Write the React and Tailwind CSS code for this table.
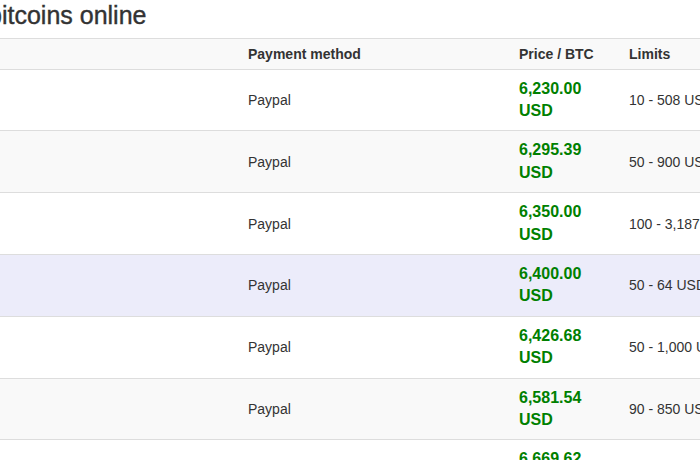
import React from "react";

const offers = [
  { price: "6,230.00", limits: "10 - 508 USD" },
  { price: "6,295.39", limits: "50 - 900 USD" },
  { price: "6,350.00", limits: "100 - 3,187 USD" },
  { price: "6,400.00", limits: "50 - 64 USD", hover: true },
  { price: "6,426.68", limits: "50 - 1,000 USD" },
  { price: "6,581.54", limits: "90 - 850 USD" },
  { price: "6,669.62", limits: "100 - 2,000 USD" },
];

const App = () => {
  return (
    <div
      className="w-[700px] h-[460px] overflow-hidden bg-white text-[14px] leading-[20px] text-[#333]"
      style={{ fontFamily: '"Liberation Sans", Arial, sans-serif' }}
    >
      {/* Title, scrolled off to the left */}
      <h3 className="ml-[-62px] mt-[2px] mb-[8px] text-[25px] leading-[27.5px] font-normal whitespace-nowrap text-[#333] [-webkit-text-stroke:0.4px_#333]">
        Buy bitcoins online
      </h3>

      {/* Offers table */}
      <table className="w-[900px] table-fixed border-collapse">
        <colgroup>
          <col className="w-[240px]" />
          <col className="w-[271px]" />
          <col className="w-[110px]" />
          <col className="w-[279px]" />
        </colgroup>
        <thead className="bg-[#f9f9f9]">
          <tr className="border-t border-b border-[#ddd]">
            <th className="px-2 py-[5px]"></th>
            <th className="px-2 py-[5px] text-left font-bold">Payment method</th>
            <th className="px-2 py-[5px] text-left font-bold">Price / BTC</th>
            <th className="px-2 py-[5px] text-left font-bold">Limits</th>
          </tr>
        </thead>
        <tbody>
          {offers.map((o, i) => (
            <tr
              key={i}
              className={
                "border-b border-[#ddd] " +
                (o.hover ? "bg-[#ececfa]" : i % 2 === 1 ? "bg-[#f9f9f9]" : "bg-white")
              }
            >
              <td className="p-2 align-middle"></td>
              <td className="p-2 align-middle">Paypal</td>
              <td className="p-2 align-middle text-[16px] leading-[22.4px] font-bold text-[#008000]">
                {o.price}
                <br />
                USD
              </td>
              <td className="p-2 align-middle whitespace-nowrap">{o.limits}</td>
            </tr>
          ))}
        </tbody>
      </table>
    </div>
  );
};

export default App;
